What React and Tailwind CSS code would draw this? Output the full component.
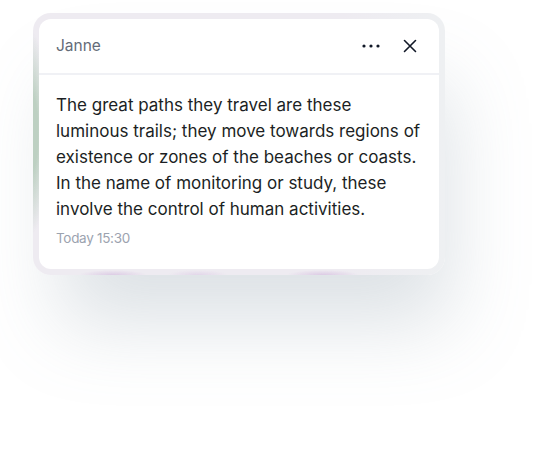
import React from 'react'

const lines = [
    'The great paths they travel are these',
    'luminous trails; they move towards regions of',
    'existence or zones of the beaches or coasts.',
    'In the name of monitoring or study, these',
    'involve the control of human activities.',
]

function Dots() {
    return (
        <svg width="20" height="6" viewBox="0 0 20 6" fill="#111827">
            <circle cx="3" cy="3" r="1.6" />
            <circle cx="10" cy="3" r="1.6" />
            <circle cx="17" cy="3" r="1.6" />
        </svg>
    )
}

function Close() {
    return (
        <svg width="14" height="14" viewBox="0 0 14 14" fill="none" stroke="#111827" strokeWidth="1.6" strokeLinecap="round">
            <path d="M1.5 1.5 L12.5 12.5 M12.5 1.5 L1.5 12.5" />
        </svg>
    )
}

export default function App() {
    return (
        <div className="w-[548px] h-[460px] bg-white overflow-hidden pl-[33px] pt-[13px] font-['Inter',sans-serif]">
            {/* Glass frame, blurred colours behind it */}
            <div className="w-[412px] p-[6px] rounded-[18px] bg-[radial-gradient(14px_100px_at_0px_120px,#bdd0c2_35%,transparent),radial-gradient(34px_5px_at_80px_100%,#dccbe4,transparent),radial-gradient(30px_5px_at_165px_100%,#e2d6e9,transparent),radial-gradient(36px_5px_at_290px_100%,#dccae4,transparent),linear-gradient(to_right,#eeebf1_75%,#eef0f2)] shadow-[16px_60px_80px_-12px_rgba(120,140,155,0.26)]">
                {/* Card */}
                <div className="bg-white rounded-[12px]">
                    <div className="flex items-center justify-between h-[56px] pl-[17px] pr-[22px] border-b-2 border-[#f0f1f5]">
                        <span className="text-[15.5px] text-[#646b78]">Janne</span>
                        <div className="flex items-center gap-[22px]">
                            <Dots />
                            <Close />
                        </div>
                    </div>
                    <div className="pt-[17px] pb-[21px] px-[17px]">
                        <p className="text-[17px] leading-[26px] text-[#1c1f24] whitespace-nowrap">
                            {lines.map((l, i) => (
                                <React.Fragment key={i}>
                                    {l}
                                    {i < lines.length - 1 && <br />}
                                </React.Fragment>
                            ))}
                        </p>
                        <p className="mt-[6px] text-[13.5px] text-[#9ca3af] tracking-[-0.3px]">Today 15:30</p>
                    </div>
                </div>
            </div>
        </div>
    )
}
